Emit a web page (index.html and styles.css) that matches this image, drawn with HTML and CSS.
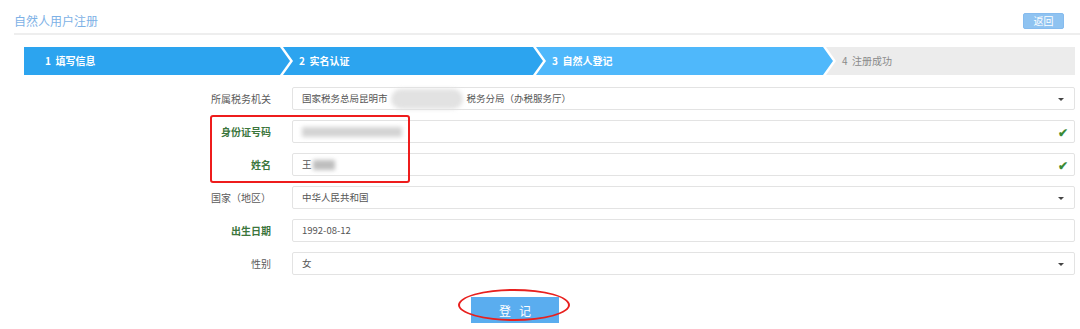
FILE: index.html
```html
<!DOCTYPE html>
<html lang="zh">
<head>
    <meta charset="UTF-8">
    <title>自然人用户注册</title>
    <link rel="stylesheet" href="styles.css">
</head>
<body>

<div class="header">
    <h2>自然人用户注册</h2>
    <button class="back">返回</button>
</div>

<div class="steps">
    <div class="step step1 done">1&nbsp; 填写信息</div>
    <div class="step step2 done">2&nbsp; 实名认证</div>
    <div class="step step3 current">3&nbsp; 自然人登记</div>
    <div class="step step4">4&nbsp; 注册成功</div>
</div>

<div class="form">
    <div class="row">
        <label>所属税务机关</label>
        <div class="field select">国家税务总局昆明市<span class="blur blur-a"></span>税务分局（办税服务厅）<span class="caret"></span></div>
    </div>
    <div class="row">
        <label class="ok">身份证号码</label>
        <div class="field"><span class="blur blur-b"></span><span class="check">&#10004;</span></div>
    </div>
    <div class="row">
        <label class="ok">姓名</label>
        <div class="field">王<span class="blur blur-c"></span><span class="check">&#10004;</span></div>
    </div>
    <div class="row">
        <label>国家（地区）</label>
        <div class="field select">中华人民共和国<span class="caret"></span></div>
    </div>
    <div class="row">
        <label class="ok">出生日期</label>
        <div class="field">1992-08-12</div>
    </div>
    <div class="row">
        <label>性别</label>
        <div class="field select">女<span class="caret"></span></div>
    </div>

    <div class="actions">
        <button class="submit">登&nbsp;&nbsp;&nbsp;记</button>
        <span class="mark-ellipse"></span>
    </div>

    <span class="mark-rect"></span>
</div>

</body>
</html>
```

FILE: styles.css
```css
body {
    font-family: "Noto Sans CJK SC", "Liberation Sans", sans-serif;
    margin: 0;
    background: #fff;
    color: #555;
    font-size: 10px;
}
.header {
    display: flex;
    justify-content: space-between;
    align-items: center;
    margin: 0 0 0 14px;
    padding: 12px 16px 4px 0;
    height: 17px;
    border-bottom: 2px solid #eeeeee;
}
.header h2 {
    margin: 0;
    font-size: 12px;
    font-weight: normal;
    color: #7db1e6;
    line-height: 17px;
}
.back {
    width: 41px;
    height: 16px;
    padding: 0;
    border: 1px solid #86bbee;
    border-radius: 2px;
    background: #8fc3f1;
    color: #fff;
    font-family: inherit;
    font-size: 10px;
    line-height: 14px;
}
.steps {
    display: flex;
    margin: 12px 5px 0 24px;
    height: 28px;
}
.step {
    height: 28px;
    line-height: 28px;
    color: #fff;
    font-weight: bold;
    font-size: 10px;
    padding-left: 16px;
    box-sizing: border-box;
    margin-left: -7px;
    clip-path: polygon(0 0, calc(100% - 10px) 0, 100% 50%, calc(100% - 10px) 100%, 0 100%, 10px 50%);
}
.step1 {
    width: 266px;
    margin-left: 0;
    padding-left: 21px;
    clip-path: polygon(0 0, calc(100% - 10px) 0, 100% 50%, calc(100% - 10px) 100%, 0 100%);
}
.step2 { width: 260px; }
.step3 { width: 297px; }
.step4 {
    flex: 1;
    clip-path: polygon(0 0, 100% 0, 100% 100%, 0 100%, 10px 50%);
    color: #8a8a8a;
    font-weight: normal;
    background: #ececec;
}
.done { background: #2ca4ef; }
.current { background: #4fb8fb; }

.form {
    position: relative;
    margin-top: 12px;
    padding-right: 5px;
}
.row {
    display: flex;
    align-items: center;
    margin-bottom: 10px;
    height: 23px;
}
.row label {
    width: 271px;
    text-align: right;
    color: #5a5a5a;
}
.row label.ok {
    color: #3c763d;
    font-weight: bold;
}
.field {
    position: relative;
    flex: 1;
    margin-left: 21px;
    height: 23px;
    line-height: 21px;
    box-sizing: border-box;
    padding-left: 9px;
    border: 1px solid #e3e3e3;
    border-radius: 2px;
    color: #555;
    font-size: 9.5px;
    display: flex;
    align-items: center;
}
.caret {
    position: absolute;
    right: 10px;
    top: 10px;
    border-left: 3px solid transparent;
    border-right: 3px solid transparent;
    border-top: 3px solid #444;
}
.check {
    position: absolute;
    right: 6px;
    top: 0;
    color: #3a8a35;
    font-size: 12px;
    font-weight: bold;
}
.blur {
    display: inline-block;
    background: #d3d3d3;
    filter: blur(2px);
}
.blur-a {
    width: 72px;
    height: 20px;
    margin: 0 4px 0 3px;
    background: #e2e2e2;
    border-radius: 10px;
}
.blur-b {
    width: 100px;
    height: 10px;
    background: #d4d4d4;
}
.blur-c {
    width: 22px;
    height: 10px;
    margin-left: 1px;
    background: #bdbdbd;
}
.actions {
    position: relative;
    padding: 12px 0 0 471px;
}
.submit {
    width: 88px;
    height: 26px;
    border: none;
    background: #5aadef;
    color: #fff;
    font-family: inherit;
    font-size: 12px;
    padding: 0;
}
.mark-ellipse {
    position: absolute;
    left: 458px;
    top: 4px;
    width: 108px;
    height: 28px;
    border: 2px solid #e8201e;
    border-radius: 50%;
}
.mark-rect {
    position: absolute;
    left: 210px;
    top: 28px;
    width: 196px;
    height: 64px;
    border: 2px solid #ee1c1c;
    border-radius: 3px;
}
```
